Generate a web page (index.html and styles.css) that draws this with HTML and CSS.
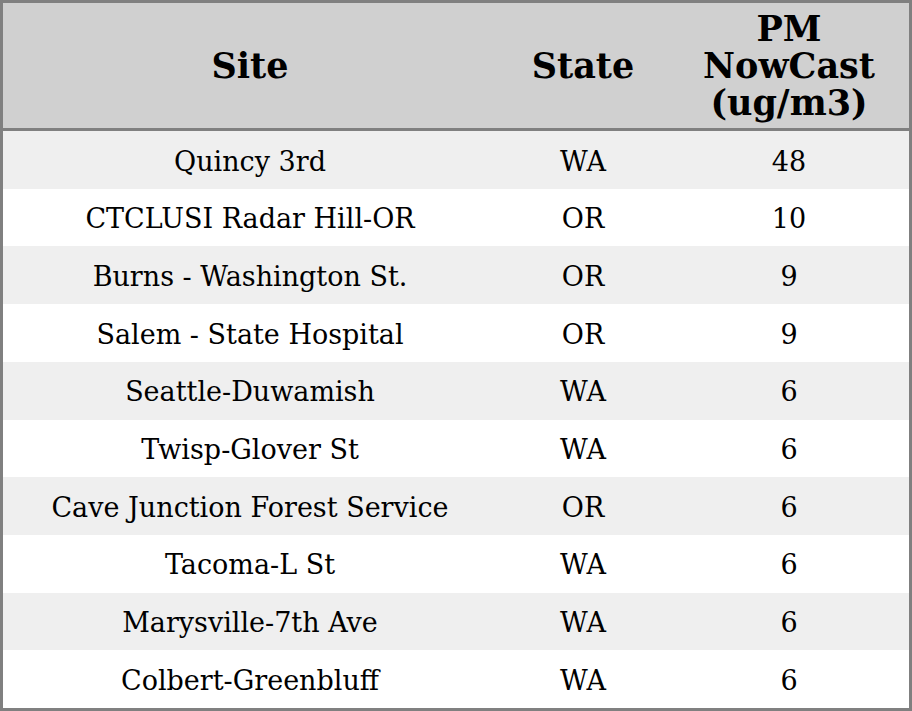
FILE: index.html
```html
<!DOCTYPE html>
<html>
<head>
<meta charset="utf-8">
<link rel="stylesheet" href="styles.css">
</head>
<body>
<table class="aq">
  <colgroup>
    <col class="c-site">
    <col class="c-state">
    <col class="c-pm">
  </colgroup>
  <thead>
    <tr><th>Site</th><th>State</th><th>PM<br>NowCast<br>(ug/m3)</th></tr>
  </thead>
  <tbody>
    <tr><td>Quincy 3rd</td><td>WA</td><td>48</td></tr>
    <tr><td>CTCLUSI Radar Hill-OR</td><td>OR</td><td>10</td></tr>
    <tr><td>Burns - Washington St.</td><td>OR</td><td>9</td></tr>
    <tr><td>Salem - State Hospital</td><td>OR</td><td>9</td></tr>
    <tr><td>Seattle-Duwamish</td><td>WA</td><td>6</td></tr>
    <tr><td>Twisp-Glover St</td><td>WA</td><td>6</td></tr>
    <tr><td>Cave Junction Forest Service</td><td>OR</td><td>6</td></tr>
    <tr><td>Tacoma-L St</td><td>WA</td><td>6</td></tr>
    <tr><td>Marysville-7th Ave</td><td>WA</td><td>6</td></tr>
    <tr><td>Colbert-Greenbluff</td><td>WA</td><td>6</td></tr>
  </tbody>
</table>
</body>
</html>
```
FILE: styles.css
```css
html, body {
  margin: 0;
  padding: 0;
  background: #ffffff;
}
.aq {
  width: 912px;
  border-collapse: separate;
  border-spacing: 0;
  border: 3px solid #808080;
  font-family: "DejaVu Serif", serif;
  color: #000;
  table-layout: fixed;
}
.c-site { width: 494px; }
.c-state { width: 172px; }
.c-pm { width: 240px; }
.aq th {
  background: #d0d0d0;
  font-size: 35px;
  font-weight: bold;
  line-height: 37px;
  padding: 7px 0 7px 0;
  text-align: center;
  border-bottom: 3px solid #808080;
}
.aq td {
  font-size: 27px;
  line-height: 29.7px;
  padding: 15.5px 0 12.5px 0;
  text-align: center;
  white-space: nowrap;
}
.aq tbody tr:nth-child(odd) td { background: #efefef; }
.aq tbody tr:nth-child(even) td { background: #ffffff; }
```
